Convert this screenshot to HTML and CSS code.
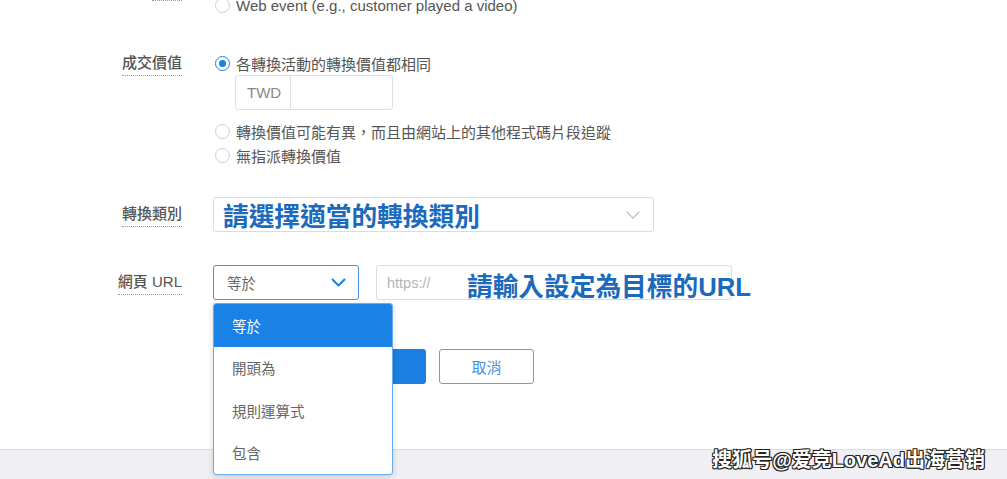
FILE: index.html
```html
<!DOCTYPE html>
<html lang="zh-Hant">
<head>
    <meta charset="UTF-8">
    <meta name="viewport" content="width=device-width, initial-scale=1.0">
    <title>轉換動作設定</title>
    <link rel="stylesheet" href="styles.css">
</head>
<body>
    <div class="page">
        <div class="main">
            <div class="form">

                <!-- Source (scrolled off the top) -->
                <div class="row row-source">
                    <div class="label"><span>來源</span></div>
                    <div class="control">
                        <label class="radio"><span class="dot"></span>網站</label>
                        <label class="radio"><span class="dot"></span>Web event (e.g., customer played a video)</label>
                    </div>
                </div>

                <!-- Value -->
                <div class="row row-value">
                    <div class="label label-top"><span>成交價值</span></div>
                    <div class="control">
                        <label class="radio checked"><span class="dot"></span>各轉換活動的轉換價值都相同</label>
                        <div class="money">
                            <span class="currency">TWD</span>
                            <span class="amount"></span>
                        </div>
                        <label class="radio radio-gap"><span class="dot"></span>轉換價值可能有異，而且由網站上的其他程式碼片段追蹤</label>
                        <label class="radio"><span class="dot"></span>無指派轉換價值</label>
                    </div>
                </div>

                <!-- Category -->
                <div class="row row-category">
                    <div class="label"><span>轉換類別</span></div>
                    <div class="control">
                        <div class="select select-wide">
                            <span class="hint">請選擇適當的轉換類別</span>
                            <svg class="chevron light" width="14" height="8" viewBox="0 0 14 8"><polyline points="1,1 7,7 13,1"/></svg>
                        </div>
                    </div>
                </div>

                <!-- URL -->
                <div class="row row-url">
                    <div class="label"><span>網頁 URL</span></div>
                    <div class="control url-line">
                        <div class="select-wrap">
                            <div class="select select-open">
                                <span class="value">等於</span>
                                <svg class="chevron blue" width="15" height="9" viewBox="0 0 15 9"><polyline points="1.5,1.5 7.5,7.5 13.5,1.5"/></svg>
                            </div>
                            <ul class="menu">
                                <li class="active">等於</li>
                                <li>開頭為</li>
                                <li>規則運算式</li>
                                <li>包含</li>
                            </ul>
                        </div>
                        <div class="url-input">
                            <span class="placeholder">https://</span>
                            <span class="hint url-hint">請輸入設定為目標的URL</span>
                        </div>
                    </div>
                </div>

                <!-- Actions -->
                <div class="row row-actions">
                    <div></div>
                    <div class="control actions">
                        <button class="btn btn-primary">儲存並繼續</button>
                        <button class="btn btn-outline">取消</button>
                    </div>
                </div>

            </div>
        </div>
        <div class="footer"></div>
        <div class="watermark">搜狐号@爱竞LoveAd出海营销</div>
    </div>
</body>
</html>
```

FILE: styles.css
```css
body {
    margin: 0;
    font-family: "Liberation Sans", "Noto Sans CJK TC", sans-serif;
    color: #555;
    background: #ffffff;
}
.page {
    position: relative;
    height: 479px;
    display: flex;
    flex-direction: column;
    overflow: hidden;
}
.main {
    height: 449px;
    flex-shrink: 0;
    background: #ffffff;
}
.footer {
    flex: 1;
    background: #efeff4;
    border-top: 1px solid #dedee2;
}
.form {
    display: flex;
    flex-direction: column;
    margin-top: -31px;
}
.row {
    display: grid;
    grid-template-columns: 182px 1fr;
    column-gap: 31px;
    align-items: start;
}
.row-value { margin-top: 34px; }
.row-category { margin-top: 30px; }
.row-url { margin-top: 33px; }
.row-actions { margin-top: 49px; }

.label {
    text-align: right;
    font-size: 15px;
    line-height: 20px;
    font-weight: 500;
    color: #555;
    margin-top: 7px;
}
.label span {
    display: inline-block;
    padding-bottom: 2px;
    border-bottom: 1px dotted #9a9a9a;
}
.label-top { margin-top: 2px; }
.row-source .label { margin-top: 9px; }

.control {
    display: flex;
    flex-direction: column;
    align-items: flex-start;
}
.radio {
    display: flex;
    align-items: center;
    height: 24px;
    padding-left: 2px;
    font-size: 15px;
    color: #555;
}
.radio .dot {
    width: 13px;
    height: 13px;
    border: 1px solid #cfcfcf;
    border-radius: 50%;
    margin-right: 6px;
    display: flex;
    align-items: center;
    justify-content: center;
    background: #fff;
}
.radio.checked .dot {
    border-color: #1a7fe0;
}
.radio.checked .dot::after {
    content: "";
    width: 7px;
    height: 7px;
    border-radius: 50%;
    background: #1a7fe0;
}
.radio-gap { margin-top: 9px; }

.money {
    display: flex;
    margin-left: 22px;
    height: 35px;
    width: 158px;
    border: 1px solid #e0e0e0;
    border-radius: 3px;
    box-sizing: border-box;
}
.currency {
    width: 55px;
    box-sizing: border-box;
    padding-left: 11px;
    border-right: 1px solid #e0e0e0;
    display: flex;
    align-items: center;
    font-size: 15px;
    color: #888;
}
.amount { flex: 1; }

.select {
    display: flex;
    align-items: center;
    justify-content: space-between;
    height: 35px;
    box-sizing: border-box;
    border: 1px solid #dcdcdc;
    border-radius: 3px;
    background: #fff;
}
.select-wide {
    width: 441px;
    padding: 0 13px 0 9px;
}
.hint {
    font-size: 25.7px;
    font-weight: bold;
    color: #1b6abd;
    white-space: nowrap;
}
.chevron {
    fill: none;
    stroke-linecap: round;
    stroke-linejoin: round;
}
.chevron.light { stroke: #c2c2c2; stroke-width: 1.3; }
.chevron.blue { stroke: #1a7fe0; stroke-width: 2; }

.url-line {
    flex-direction: row;
    gap: 17px;
}
.select-wrap { position: relative; }
.select-open {
    width: 146px;
    padding: 0 12px 0 13px;
    border-color: #4a90e2;
}
.value {
    font-size: 14.5px;
    color: #666;
}
.menu {
    position: absolute;
    top: 38px;
    left: 0;
    z-index: 5;
    width: 178px;
    margin: 0;
    padding: 0;
    list-style: none;
    background: #fff;
    border: 1px solid #6aabf0;
    border-radius: 3px;
    box-shadow: 0 2px 6px rgba(0, 0, 0, 0.15);
    overflow: hidden;
}
.menu li {
    height: 42.5px;
    display: flex;
    align-items: center;
    padding-left: 18px;
    font-size: 14.5px;
    color: #666;
}
.menu li.active {
    background: #1a82e4;
    color: #fff;
}
.url-input {
    position: relative;
    width: 356px;
    height: 35px;
    box-sizing: border-box;
    border: 1px solid #dcdcdc;
    border-radius: 3px;
    display: flex;
    align-items: center;
    padding-left: 10px;
}
.placeholder {
    font-size: 14.5px;
    color: #b4b4b4;
}
.url-hint {
    position: absolute;
    left: 90px;
    top: 0;
}

.actions {
    flex-direction: row;
    gap: 13px;
}
.btn {
    height: 35px;
    border-radius: 3px;
    font-family: inherit;
    font-size: 15px;
    cursor: pointer;
}
.btn-primary {
    width: 213px;
    background: #1a7fe0;
    border: none;
    color: #fff;
}
.btn-outline {
    width: 95px;
    background: #fff;
    border: 1px solid #5fa2ea;
    color: #4a90e2;
}
.watermark {
    position: absolute;
    z-index: 10;
    right: 22px;
    top: 444px;
    font-family: "Liberation Sans", "Noto Sans CJK SC", sans-serif;
    font-size: 20px;
    font-weight: bold;
    color: #fff;
    text-shadow: 1px 1px 0 #222, -1px -1px 0 #222, 1px -1px 0 #222, -1px 1px 0 #222, 0 1px 0 #222, 1px 0 0 #222;
    white-space: nowrap;
}
```
